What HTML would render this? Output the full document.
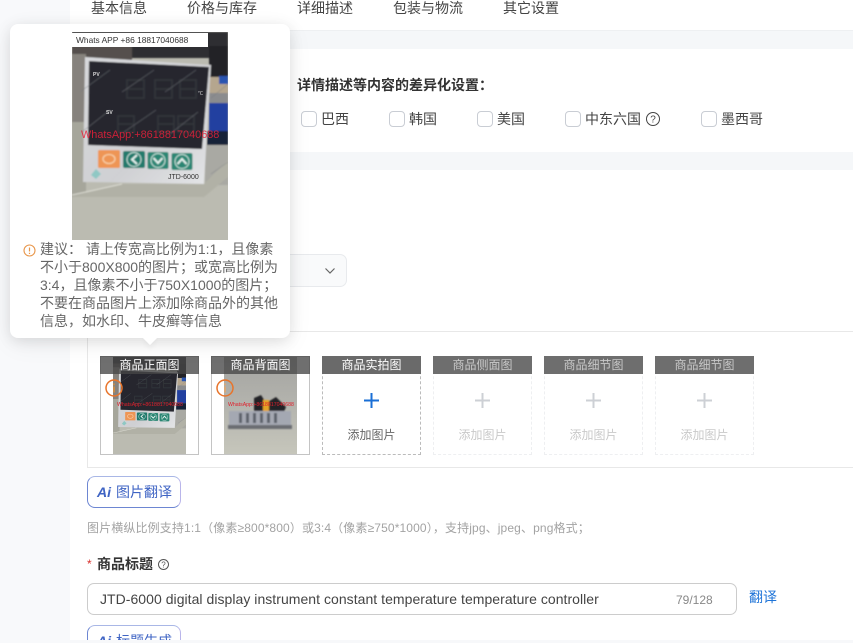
<!DOCTYPE html>
<html><head><meta charset="utf-8">
<style>
*{box-sizing:border-box}
html,body{margin:0;padding:0;width:853px;height:643px;overflow:hidden}
#w{width:853px;height:643px;overflow:hidden;position:relative;background:#f8f9fb;font-family:"Liberation Sans","Noto Sans CJK SC",sans-serif;color:#333}
.a{position:absolute;white-space:nowrap}
.t{position:absolute;white-space:nowrap;line-height:20px}
.cb{position:absolute;top:111px;width:16px;height:16px;border:1px solid #c9cdd4;border-radius:4px;background:#fff}
.hd{position:absolute;top:356px;width:99px;height:18px;background:rgba(70,70,70,.78);color:#fff;font-size:12px;line-height:18px;text-align:center;z-index:3}
.hd.off{background:#6e6e6e;color:#c8c8c8}
.slot{position:absolute;top:356px;width:99px;height:99px;border:1px dashed #bbb;background:#fff}
.slot.off{border-color:#eeeff1}
.box{position:absolute;top:356px;width:99px;height:99px;border:1px solid #c4c4c4;background:#fff}
.plus{position:absolute;left:41px;top:36px;width:15px;height:15px}
.add{position:absolute;left:0;width:97px;top:68px;text-align:center;font-size:12px;line-height:20px;color:#666}
.off .add{color:#c9c9c9}
.aib{position:absolute;left:87px;width:94px;height:32px;border:1px solid #6d86d2;border-right-color:#b9b5ea;border-top-color:#a9b7e6;border-radius:8px;background:#fff;color:#3f64c4;font-size:14px;line-height:30px;padding-left:28px}
.aib b{position:absolute;left:9px;top:0;font-style:italic;font-size:14px;color:#3f64c4}
</style></head>
<body>
<div id="w">
<svg width="0" height="0" style="position:absolute">
<defs>
<filter id="bl" x="-5%" y="-5%" width="110%" height="110%"><feGaussianBlur stdDeviation="0.8"/></filter>
<linearGradient id="pg" x1="0" y1="0" x2="1" y2="1"><stop offset="0" stop-color="#d8d9dc"/><stop offset=".6" stop-color="#cfd0d3"/><stop offset="1" stop-color="#e4e5e7"/></linearGradient>
<linearGradient id="p2g" x1="0" y1="0" x2="0" y2="1"><stop offset="0" stop-color="#a3a3a0"/><stop offset=".5" stop-color="#b4b4ae"/><stop offset="1" stop-color="#c6c6bb"/></linearGradient>
<symbol id="p1" viewBox="0 0 156 208" preserveAspectRatio="none">
<rect width="156" height="208" fill="#bbbbb1"/>
<g filter="url(#bl)">
<rect width="156" height="26" fill="#2f2f31"/>
<rect x="0" y="14" width="60" height="14" fill="#54504e"/>
<rect x="0" y="22" width="14" height="70" fill="#86827d"/>
<rect x="0" y="90" width="14" height="75" fill="#a6a69b"/>
<rect x="137" y="14" width="19" height="31" fill="#242427"/>
<rect x="137" y="45" width="19" height="16" fill="#b5a68e"/>
<rect x="147" y="44" width="9" height="8" fill="#2a55b0"/>
<rect x="137" y="61" width="19" height="10" fill="#8b8c8e"/>
<rect x="137" y="71" width="19" height="28" fill="#2040a0"/>
<rect x="135" y="99" width="21" height="14" fill="#172038"/>
<rect x="133" y="113" width="23" height="40" fill="#a9a9a3"/>
<path d="M0 164L50 152H132L156 128V145L132 165H0Z" fill="#b1b1a6"/>
<path d="M0 163L50 152" fill="none" stroke="#dcdcd3" stroke-width="1"/>
<path d="M13 25L139 33L132 152L11 150Z" fill="url(#pg)"/>
<path d="M17 29L137 35L130 117L16 113Z" fill="#25272e"/>
<rect x="26" y="118" width="22" height="18" rx="1.500" fill="#ee9555"/>
<rect x="51" y="119" width="22" height="17" rx="2" fill="#237a6c"/>
<rect x="75.500" y="120" width="21" height="17" rx="2" fill="#2a8673"/>
<rect x="99.500" y="121" width="21" height="17" rx="2" fill="#2a8673"/>
<ellipse cx="37" cy="127" rx="6" ry="4.500" fill="none" stroke="#f7cfa8" stroke-width="1.300"/>
<circle cx="62" cy="127.500" r="7" fill="none" stroke="#cfe6e0" stroke-width="1"/>
<path d="M65 123L60 127.500L65 132" fill="none" stroke="#e5f2ef" stroke-width="2"/>
<circle cx="86" cy="128.500" r="7" fill="none" stroke="#cfe6e0" stroke-width="1"/>
<path d="M81.500 126L86 131L90.500 126" fill="none" stroke="#e5f2ef" stroke-width="2"/>
<circle cx="110" cy="129.500" r="7" fill="none" stroke="#cfe6e0" stroke-width="1"/>
<path d="M105.500 132L110 127L114.500 132" fill="none" stroke="#e5f2ef" stroke-width="2"/>
<path d="M19 143L24 137L29 142L24 147Z" fill="#8fc8c4"/>
<g fill="none" stroke="#32343a" stroke-width="1.800">
<path d="M55 48H72V66H55ZM55 57H72"/>
<path d="M83 48H100V66H83ZM83 57H100"/>
<path d="M108 48H124V66H108ZM108 57H124"/>
<path d="M46 84H62V100H46ZM46 92H62"/>
<path d="M86 84H102V100H86ZM86 92H102"/>
<path d="M106 84H122V100H106ZM106 92H122"/>
</g>
<g stroke="#777a80" stroke-width=".7" opacity=".6">
<path d="M8 60L38 38M50 60L82 38M93 60L124 38M10 100L38 78M52 100L84 78M98 102L126 80"/>
<path d="M139 66L156 52M139 142L156 130"/>
</g>
</g>
</symbol>
<symbol id="p2" viewBox="0 0 73 97" preserveAspectRatio="none">
<rect width="73" height="97" fill="url(#p2g)"/>
<g filter="url(#bl)">
<path d="M30 41L37 38L42 46L52 40L62 50L60 55H30Z" fill="#232325"/>
<rect x="39" y="43" width="6" height="15" fill="#e5a426"/>
<rect x="5" y="54" width="62" height="15" fill="#a4a8b2"/>
<path d="M4 68H68V72H4Z" fill="#6b6d72"/>
<g fill="#5c606a"><rect x="15" y="56" width="3" height="10"/><rect x="22" y="56" width="3" height="10"/><rect x="29" y="56" width="3" height="10"/><rect x="36" y="56" width="3" height="10"/><rect x="43" y="56" width="3" height="10"/><rect x="50" y="56" width="3" height="10"/></g>
</g>
</symbol>
</defs>
</svg>

<!-- page panels -->
<div class="a" style="left:70px;top:0;width:783px;height:643px;background:#fff"></div>
<div class="a" style="left:70px;top:30px;width:783px;height:19px;background:#f5f7f9;border-top:1px solid #eef0f2"></div>
<div class="a" style="left:70px;top:152px;width:783px;height:18px;background:#f5f7f9"></div>

<!-- nav -->
<div class="t" style="left:91px;top:-2px;font-size:14px;color:#444">基本信息</div>
<div class="t" style="left:187px;top:-2px;font-size:14px;color:#444">价格与库存</div>
<div class="t" style="left:297px;top:-2px;font-size:14px;color:#444">详细描述</div>
<div class="t" style="left:393px;top:-2px;font-size:14px;color:#444">包装与物流</div>
<div class="t" style="left:503px;top:-2px;font-size:14px;color:#444">其它设置</div>

<!-- differentiation -->
<div class="t" style="left:297px;top:75px;font-size:14px;font-weight:700;color:#333">详情描述等内容的差异化设置&#xFF1A;</div>
<div class="cb" style="left:301px"></div><div class="t" style="left:321px;top:109px;font-size:14px;color:#444">巴西</div>
<div class="cb" style="left:389px"></div><div class="t" style="left:409px;top:109px;font-size:14px;color:#444">韩国</div>
<div class="cb" style="left:477px"></div><div class="t" style="left:497px;top:109px;font-size:14px;color:#444">美国</div>
<div class="cb" style="left:565px"></div><div class="t" style="left:585px;top:109px;font-size:14px;color:#444">中东六国</div>
<svg class="a" style="left:645px;top:111px" width="16" height="16" viewBox="0 0 16 16"><circle cx="8" cy="8" r="6.500" fill="none" stroke="#444" stroke-width="1"/><text x="8" y="11.500" text-anchor="middle" font-size="10" fill="#444" font-family="Liberation Sans">?</text></svg>
<div class="cb" style="left:701px"></div><div class="t" style="left:721px;top:109px;font-size:14px;color:#444">墨西哥</div>

<!-- select -->
<div class="a" style="left:200px;top:254px;width:147px;height:33px;background:#f9fafb;border:1px solid #e8eaed;border-radius:7px"></div>
<svg class="a" style="left:323px;top:265px" width="14" height="12" viewBox="0 0 14 12"><path d="M2.500 3.500L7 8L11.500 3.500" fill="none" stroke="#666" stroke-width="1.200"/></svg>

<!-- image frame -->
<div class="a" style="left:87px;top:331px;width:766px;height:137px;border:1px solid #e8e8e8;border-right:0;background:#fff"></div>

<div class="box" style="left:100px"></div>
<svg class="a" style="left:113px;top:357px;z-index:2" width="73" height="97"><use href="#p1" width="73" height="97"/></svg>
<div class="a" style="left:117px;top:401px;z-index:2;font-size:5.200px;line-height:9px;color:#e0202c">WhatsApp:+8618817040688</div>
<div class="hd" style="left:100px">商品正面图</div>
<svg class="a" style="left:104px;top:378px;z-index:4" width="20" height="20" viewBox="0 0 20 20"><circle cx="10" cy="10" r="8" fill="none" stroke="#e8742a" stroke-width="1.500"/><path d="M10 5.500V7.300M10 8.500V14.500" stroke="#c88a4a" stroke-width="2"/></svg>

<div class="box" style="left:211px"></div>
<svg class="a" style="left:224px;top:357px;z-index:2" width="73" height="97"><use href="#p2" width="73" height="97"/></svg>
<div class="a" style="left:228px;top:401px;z-index:2;font-size:5.200px;line-height:9px;color:#e0202c">WhatsApp:+8618817040688</div>
<div class="hd" style="left:211px">商品背面图</div>
<svg class="a" style="left:215px;top:378px;z-index:4" width="20" height="20" viewBox="0 0 20 20"><circle cx="10" cy="10" r="8" fill="none" stroke="#e8742a" stroke-width="1.500"/><path d="M10 5.500V7.300M10 8.500V14.500" stroke="#d9a878" stroke-width="2"/></svg>

<div class="slot" style="left:322px"><svg class="plus" viewBox="0 0 15 15"><path d="M7.500 0V15M0 7.500H15" stroke="#1a6fd6" stroke-width="2"/></svg><div class="add">添加图片</div></div>
<div class="hd" style="left:322px;background:#6a6a6a">商品实拍图</div>
<div class="slot off" style="left:433px"><svg class="plus" viewBox="0 0 15 15"><path d="M7.500 0V15M0 7.500H15" stroke="#cdd0d5" stroke-width="2"/></svg><div class="add">添加图片</div></div>
<div class="hd off" style="left:433px">商品侧面图</div>
<div class="slot off" style="left:544px"><svg class="plus" viewBox="0 0 15 15"><path d="M7.500 0V15M0 7.500H15" stroke="#cdd0d5" stroke-width="2"/></svg><div class="add">添加图片</div></div>
<div class="hd off" style="left:544px">商品细节图</div>
<div class="slot off" style="left:655px"><svg class="plus" viewBox="0 0 15 15"><path d="M7.500 0V15M0 7.500H15" stroke="#cdd0d5" stroke-width="2"/></svg><div class="add">添加图片</div></div>
<div class="hd off" style="left:655px">商品细节图</div>

<!-- below -->
<div class="aib" style="top:476px"><b>Ai</b>图片翻译</div>
<div class="t" style="left:87px;top:518px;font-size:12px;color:#a3a3a3;letter-spacing:.13px">图片横纵比例支持1:1&#xFF08;像素≥800*800&#xFF09;或3:4&#xFF08;像素≥750*1000&#xFF09;&#xFF0C;支持jpg、jpeg、png格式&#xFF1B;</div>
<div class="t" style="left:87px;top:554px;font-size:12px;color:#d8302c">*</div>
<div class="t" style="left:97px;top:554px;font-size:14px;font-weight:700;color:#333">商品标题</div>
<svg class="a" style="left:157px;top:558px" width="13" height="13" viewBox="0 0 13 13"><circle cx="6.500" cy="6.500" r="5" fill="none" stroke="#555" stroke-width="1"/><text x="6.500" y="9.500" text-anchor="middle" font-size="8" fill="#555" font-family="Liberation Sans">?</text></svg>
<div class="a" style="left:87px;top:583px;width:650px;height:32px;border:1px solid #ccc;border-radius:7px;background:#fff"></div>
<div class="t" style="left:100px;top:589px;font-size:14px;color:#444;letter-spacing:.04px">JTD-6000 digital display instrument constant temperature temperature controller</div>
<div class="t" style="left:676px;top:590px;font-size:12px;color:#888">79/128</div>
<div class="t" style="left:749px;top:587px;font-size:14px;color:#1f74d8">翻译</div>
<div class="aib" style="top:625px"><b>Ai</b>标题生成</div>
<div class="a" style="left:70px;top:640px;width:783px;height:3px;background:#f7f8fa"></div>

<!-- tooltip -->
<div class="a" style="left:10px;top:24px;width:280px;height:314px;background:#fff;border-radius:8px;box-shadow:0 3px 14px rgba(0,0,0,.10),0 6px 26px rgba(0,0,0,.06);z-index:10"></div>
<div class="a" style="left:145px;top:333px;width:10px;height:10px;background:#fff;transform:rotate(45deg);z-index:10;box-shadow:3px 3px 5px rgba(0,0,0,.04)"></div>
<svg class="a" style="left:72px;top:32px;z-index:11" width="156" height="208"><use href="#p1" width="156" height="208"/></svg>
<div class="a" style="left:72px;top:33px;width:136px;height:14px;background:#fff;z-index:12;font-size:8.400px;line-height:14px;padding-left:4px;color:#333">Whats APP +86 18817040688</div>
<div class="a" style="left:81px;top:127px;z-index:12;font-size:10.900px;line-height:16px;color:#e8203a;opacity:.85">WhatsApp:+8618817040688</div>
<div class="a" style="left:93px;top:72px;font-size:5px;line-height:6px;font-weight:700;color:#ddd;z-index:12">PV</div>
<div class="a" style="left:106px;top:110px;font-size:5px;line-height:6px;font-weight:700;color:#ddd;z-index:12">SV</div>
<div class="a" style="left:198px;top:91px;font-size:5px;line-height:6px;color:#ddd;z-index:12">℃</div>
<div class="a" style="left:168px;top:173px;font-size:7px;line-height:10px;color:#333;z-index:12">JTD-6000</div>
<svg class="a" style="left:23px;top:244px;z-index:12" width="13" height="13" viewBox="0 0 13 13"><circle cx="6.500" cy="6.500" r="5.500" fill="none" stroke="#e8964a" stroke-width="1.100"/><path d="M6.500 3.500V7.500M6.500 8.700V10" stroke="#e8964a" stroke-width="1.200"/></svg>
<div class="a" style="left:40px;top:240px;z-index:12;font-size:14px;line-height:18px;color:#666">建议&#xFF1A; 请上传宽高比例为1:1&#xFF0C;且像素<br>不小于800X800的图片&#xFF1B;或宽高比例为<br>3:4&#xFF0C;且像素不小于750X1000的图片&#xFF1B;<br>不要在商品图片上添加除商品外的其他<br>信息&#xFF0C;如水印、牛皮癣等信息</div>
</div>
</body></html>
